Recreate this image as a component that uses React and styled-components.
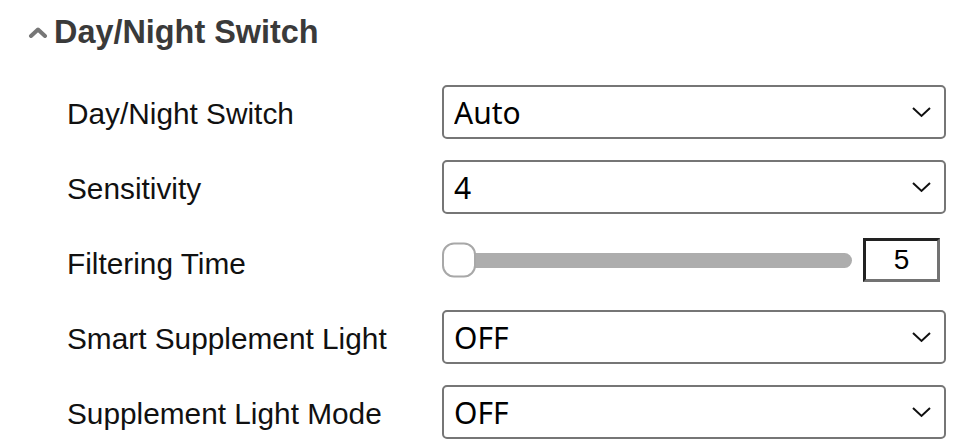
import React from "react";
import styled, { createGlobalStyle } from "styled-components";

const Global = createGlobalStyle`
  html, body { margin: 0; padding: 0; background: #fff; }
  body { font-family: "Liberation Sans", Arial, sans-serif; }
`;

const Page = styled.div`
  width: 961px;
  height: 448px;
  padding: 12px 15px 0 28px;
  box-sizing: border-box;
`;

const Header = styled.div`
  display: flex;
  align-items: center;
  gap: 6px;
  height: 40px;
`;

const Title = styled.h2`
  margin: 0;
  font-size: 32.4px;
  font-weight: 700;
  color: #3a3a3a;
`;

const Form = styled.div`
  display: flex;
  flex-direction: column;
  gap: 21px;
  margin-top: 33px;
  padding-left: 39px;
`;

const Row = styled.div`
  display: grid;
  grid-template-columns: 375px 504px;
  align-items: center;
  height: 54px;
`;

const Label = styled.label`
  font-size: 29.8px;
  color: #111;
  padding-top: 3px;
`;

const SelectWrap = styled.div`
  position: relative;
  width: 504px;
  height: 54px;
`;

const Select = styled.select`
  appearance: none;
  width: 100%;
  height: 100%;
  border: 2px solid #767676;
  border-radius: 5px;
  background: #fff;
  padding: 0 50px 0 10px;
  font-family: "Noto Sans", "Liberation Sans", sans-serif;
  font-size: 30px;
  color: #000;
  outline: none;
`;

const Chevron = styled.svg`
  position: absolute;
  right: 15px;
  top: 50%;
  transform: translateY(-50%);
  pointer-events: none;
`;

const SliderRow = styled.div`
  display: flex;
  align-items: center;
  gap: 11px;
  margin-top: -4px;
`;

const Track = styled.div`
  position: relative;
  width: 410px;
  height: 15px;
  background: #adadad;
  border-radius: 8px;
`;

const Thumb = styled.div`
  position: absolute;
  left: 0;
  top: 50%;
  transform: translateY(-50%);
  width: 30px;
  height: 31px;
  border: 2px solid #a8a8a8;
  border-radius: 12px;
  background: #fff;
`;

const NumberBox = styled.div`
  width: 71px;
  height: 38px;
  border-style: solid;
  border-width: 3px;
  border-color: #222 #737373 #737373 #222;
  display: flex;
  align-items: center;
  justify-content: center;
  font-size: 28px;
  color: #000;
`;

const SelectField = ({ value }) => (
  <SelectWrap>
    <Select defaultValue={value}>
      <option>{value}</option>
    </Select>
    <Chevron width="19" height="11" viewBox="0 0 19 11">
      <path d="M1 1.5 L9.5 9.5 L18 1.5" fill="none" stroke="#111" strokeWidth="2" />
    </Chevron>
  </SelectWrap>
);

export default function App() {
  return (
    <>
      <Global />
      <Page>
        <Header>
          <svg width="20" height="12" viewBox="0 0 20 12">
            <path d="M3 10 L10 3.5 L17 10" fill="none" stroke="#777" strokeWidth="4" strokeLinejoin="round" strokeLinecap="round" />
          </svg>
          <Title>Day/Night Switch</Title>
        </Header>
        <Form>
          <Row>
            <Label>Day/Night Switch</Label>
            <SelectField value="Auto" />
          </Row>
          <Row>
            <Label>Sensitivity</Label>
            <SelectField value="4" />
          </Row>
          <Row>
            <Label>Filtering Time</Label>
            <SliderRow>
              <Track>
                <Thumb />
              </Track>
              <NumberBox>5</NumberBox>
            </SliderRow>
          </Row>
          <Row>
            <Label>Smart Supplement Light</Label>
            <SelectField value="OFF" />
          </Row>
          <Row>
            <Label>Supplement Light Mode</Label>
            <SelectField value="OFF" />
          </Row>
        </Form>
      </Page>
    </>
  );
}
